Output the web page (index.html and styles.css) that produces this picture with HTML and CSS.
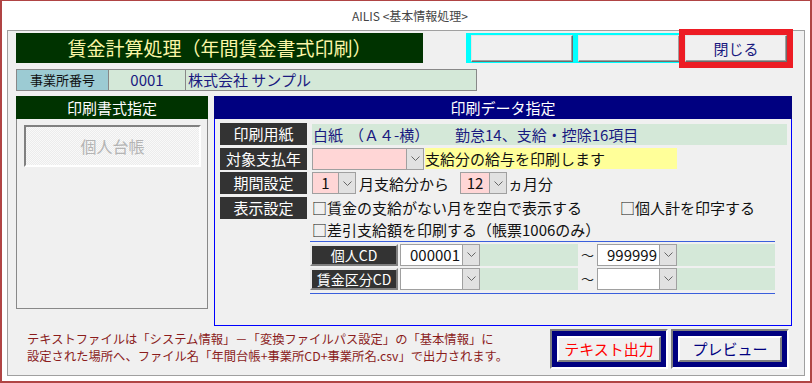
FILE: index.html
```html
<!DOCTYPE html>
<html lang="ja">
<head>
    <meta charset="UTF-8">
    <title>AILIS &lt;基本情報処理&gt;</title>
    <link rel="stylesheet" href="styles.css">
</head>
<body>

<div class="window">
    <div class="caption">AILIS &lt;基本情報処理&gt;</div>

    <div class="panel">
        <div class="top-row">
            <h1 class="title">賃金計算処理（年間賃金書式印刷）</h1>
            <div class="func-keys">
                <button type="button" class="key"></button>
                <button type="button" class="key"></button>
                <button type="button" class="key close">閉じる</button>
            </div>
        </div>

        <div class="office">
            <span class="office-label">事業所番号</span>
            <span class="office-code">0001</span>
            <span class="office-name">株式会社 サンプル</span>
        </div>

        <div class="main">
            <!-- left: format selection -->
            <section class="format">
                <h2 class="format-head">印刷書式指定</h2>
                <div class="format-body">
                    <button type="button" class="format-btn" disabled>個人台帳</button>
                </div>
            </section>

            <!-- right: print data -->
            <section class="data">
                <h2 class="data-head">印刷データ指定</h2>
                <div class="data-body">
                    <div class="rows">
                        <div class="row">
                            <span class="label">印刷用紙</span>
                            <span class="paper">
                                <span class="paper-kind">白紙</span>
                                <span class="paper-size">（Ａ４-横）</span>
                                <span>勤怠14、支給・控除16項目</span>
                            </span>
                        </div>

                        <div class="row">
                            <span class="label">対象支払年</span>
                            <span class="combo year">
                                <span class="val"></span>
                                <span class="arrow"><svg width="9" height="5" viewBox="0 0 9 5"><polyline points="0.5,0.5 4.5,4.5 8.5,0.5" fill="none" stroke="#666"/></svg></span>
                            </span>
                            <span class="hint">支給分の給与を印刷します</span>
                        </div>

                        <div class="row">
                            <span class="label">期間設定</span>
                            <span class="combo month">
                                <span class="val">1</span>
                                <span class="arrow"><svg width="9" height="5" viewBox="0 0 9 5"><polyline points="0.5,0.5 4.5,4.5 8.5,0.5" fill="none" stroke="#666"/></svg></span>
                            </span>
                            <span class="text from">月支給分から</span>
                            <span class="combo count">
                                <span class="val">12</span>
                                <span class="arrow"><svg width="9" height="5" viewBox="0 0 9 5"><polyline points="0.5,0.5 4.5,4.5 8.5,0.5" fill="none" stroke="#666"/></svg></span>
                            </span>
                            <span class="text unit">ヵ月分</span>
                        </div>

                        <div class="row multi">
                            <span class="label">表示設定</span>
                            <div class="checks">
                                <div class="check-line">
                                    <span class="check first">□賃金の支給がない月を空白で表示する</span>
                                    <span class="check">□個人計を印字する</span>
                                </div>
                                <div class="check-line">
                                    <span class="check">□差引支給額を印刷する（帳票1006のみ）</span>
                                </div>
                            </div>
                        </div>
                    </div>

                    <div class="cd">
                        <div class="cd-row">
                            <span class="cd-label">個人CD</span>
                            <span class="combo white">
                                <span class="val">000001</span>
                                <span class="arrow"><svg width="9" height="5" viewBox="0 0 9 5"><polyline points="0.5,0.5 4.5,4.5 8.5,0.5" fill="none" stroke="#666"/></svg></span>
                            </span>
                            <span class="fill"></span>
                            <span class="tilde">～</span>
                            <span class="combo white">
                                <span class="val">999999</span>
                                <span class="arrow"><svg width="9" height="5" viewBox="0 0 9 5"><polyline points="0.5,0.5 4.5,4.5 8.5,0.5" fill="none" stroke="#666"/></svg></span>
                            </span>
                            <span class="fill"></span>
                        </div>
                        <div class="cd-row">
                            <span class="cd-label">賃金区分CD</span>
                            <span class="combo white">
                                <span class="val"></span>
                                <span class="arrow"><svg width="9" height="5" viewBox="0 0 9 5"><polyline points="0.5,0.5 4.5,4.5 8.5,0.5" fill="none" stroke="#666"/></svg></span>
                            </span>
                            <span class="fill"></span>
                            <span class="tilde">～</span>
                            <span class="combo white">
                                <span class="val"></span>
                                <span class="arrow"><svg width="9" height="5" viewBox="0 0 9 5"><polyline points="0.5,0.5 4.5,4.5 8.5,0.5" fill="none" stroke="#666"/></svg></span>
                            </span>
                            <span class="fill"></span>
                        </div>
                    </div>
                </div>
            </section>
        </div>

        <div class="footer">
            <p class="note">テキストファイルは「システム情報」－「変換ファイルパス設定」の「基本情報」に<br>設定された場所へ、ファイル名「年間台帳+事業所CD+事業所名.csv」で出力されます。</p>
            <div class="actions">
                <button type="button" class="act"><span class="act-inner export">テキスト出力</span></button>
                <button type="button" class="act"><span class="act-inner">プレビュー</span></button>
            </div>
        </div>
    </div>
</div>

</body>
</html>
```

FILE: styles.css
```css
* {
    box-sizing: border-box;
}

body {
    margin: 0;
    font-family: "Noto Sans CJK JP", sans-serif;
    background: #fff;
}

.window {
    width: 812px;
    height: 383px;
    border: 2px solid #b04444;
    border-top-width: 1px;
    background: #fff;
}

.caption {
    height: 29px;
    line-height: 29px;
    text-align: center;
    font-size: 12px;
    color: #444;
    padding-left: 8px;
}

.panel {
    margin: 0 5px;
    height: 346px;
    border: 1px solid #a0a0a0;
    background: #f0f0f0;
    padding: 2px 12px 0 8px;
}

/* title row */
.top-row {
    display: flex;
    height: 30px;
}

.title {
    margin: 0;
    width: 407px;
    height: 30px;
    background: #003300;
    color: #fbf6a6;
    font-size: 19px;
    font-weight: normal;
    line-height: 30px;
    text-align: center;
}

.func-keys {
    display: flex;
    gap: 5px;
    margin-left: 43px;
    height: 30px;
    padding: 2px 5px 1px 5px;
    background: #00ffff;
}

.key {
    width: 102px;
    height: 27px;
    padding: 0;
    background: #f0f0f0;
    border: 1px solid;
    border-color: #e4e4e4 #6d6d6d #6d6d6d #e4e4e4;
    box-shadow: inset -1px -1px #a0a0a0;
    font-family: inherit;
    font-size: 15px;
    color: #1a1a80;
}

.close {
    outline: 6px solid #ed1c24;
}

/* office row */
.office {
    display: flex;
    width: 461px;
    height: 22px;
    margin-top: 6px;
}

.office span {
    border: 1px solid #888;
    line-height: 20px;
}

.office-label {
    width: 93px;
    background: #9ccbd3;
    text-align: center;
    font-size: 13px;
    color: #111;
}

.office-code {
    width: 78px;
    margin-left: -1px;
    background: #d4e8d8;
    text-align: center;
    font-size: 15px;
    color: #1a1a80;
}

.office-name {
    flex: 1;
    margin-left: -1px;
    padding-left: 2px;
    background: #d4e8d8;
    font-size: 15px;
    color: #1a1a80;
}

/* main area */
.main {
    display: flex;
    gap: 6px;
    align-items: flex-start;
    margin-top: 5px;
}

.format {
    width: 192px;
}

.format-head {
    margin: 0;
    height: 23px;
    background: #003300;
    color: #fff;
    font-size: 15px;
    font-weight: normal;
    line-height: 23px;
    text-align: center;
}

.format-body {
    height: 190px;
    border: 1px solid #888;
    border-top: 0;
    padding: 6px 6px 0 7px;
}

.format-btn {
    display: block;
    width: 177px;
    height: 42px;
    border: 2px solid;
    border-color: #808080 #fff #fff #808080;
    background: repeating-conic-gradient(#f9f9f9 0 25%, #ececec 0 50%) 0 0 / 2px 2px;
    font-family: inherit;
    font-size: 16px;
    color: #b4b4b4;
}

.data {
    width: 578px;
    height: 230px;
    border: 1px solid #0000ff;
    border-top: 0;
}

.data-head {
    margin: 0 -1px;
    height: 23px;
    background: #000080;
    color: #fff;
    font-size: 15px;
    font-weight: normal;
    line-height: 23px;
    text-align: center;
}

.data-body {
    padding: 4px 4px 0 5px;
    font-size: 15px;
    color: #111;
}

.rows {
    display: flex;
    flex-direction: column;
    gap: 2.5px;
}

.row {
    display: flex;
    align-items: center;
    height: 22px;
}

.row.multi {
    height: auto;
    align-items: flex-start;
}

.label {
    flex-shrink: 0;
    width: 87px;
    height: 22px;
    margin-right: 5px;
    background: #333;
    color: #fff;
    line-height: 22px;
    text-align: center;
}

.paper {
    display: flex;
    flex: 1;
    height: 21px;
    padding-left: 1px;
    background: #d4e8d8;
    line-height: 21px;
    color: #1a1a80;
    white-space: nowrap;
}

.paper-kind {
    width: 36px;
}

.paper-size {
    width: 106px;
}

.combo {
    display: flex;
    height: 22px;
    border: 1px solid #a0a0a0;
    background: #ffd6d6;
}

.combo .val {
    flex: 1;
    line-height: 20px;
    text-align: center;
}

.combo .arrow {
    display: flex;
    align-items: center;
    justify-content: center;
    width: 17px;
    border-left: 1px solid #a0a0a0;
    background: #e1e1e1;
}

.year {
    width: 112px;
}

.hint {
    width: 252px;
    height: 21px;
    margin-left: 1px;
    background: #ffff99;
    line-height: 21px;
}

.month {
    width: 44px;
}

.count {
    width: 47px;
}

.from {
    margin: 0 11px 0 3px;
}

.unit {
    margin-left: 1px;
}

.checks {
    line-height: 22px;
}

.check-line {
    display: flex;
    white-space: nowrap;
}

.check.first {
    width: 308px;
}

/* code ranges */
.cd {
    width: 465px;
    margin-left: 90px;
    padding: 2px 0 3px;
    border-top: 1px solid #3a5fdc;
    border-bottom: 1px solid #3a5fdc;
}

.cd-row {
    display: flex;
    height: 22px;
}

.cd-row + .cd-row {
    margin-top: 2px;
}

.cd-label {
    width: 88px;
    border: 2px solid;
    border-color: #e8e8e8 #808080 #808080 #e8e8e8;
    background: #333;
    color: #fff;
    font-size: 14px;
    line-height: 18px;
    text-align: center;
}

.combo.white {
    width: 80px;
    background: #fff;
}

.cd-label + .combo {
    margin-left: 2px;
}

.combo.white .val {
    text-align: right;
    padding-right: 2px;
}

.fill {
    width: 98px;
    background: #d4e8d8;
}

.tilde {
    width: 19px;
    font-size: 13px;
    line-height: 22px;
    text-align: center;
    color: #222;
}

/* footer */
.footer {
    display: flex;
    margin-top: 3px;
}

.note {
    margin: 0 0 0 11px;
    padding-top: 2px;
    font-size: 12.3px;
    line-height: 17px;
    color: #8b1c1c;
    white-space: nowrap;
}

.actions {
    display: flex;
    gap: 3px;
    margin: 0 3px 0 auto;
}

.act {
    width: 118px;
    height: 40px;
    padding: 5px;
    border: 2px solid;
    border-color: #808080 #fff #fff #808080;
    background: #000080;
    font-family: inherit;
}

.act-inner {
    display: block;
    height: 100%;
    border: 2px solid;
    border-color: #fff #808080 #808080 #fff;
    background: #f0f0f0;
    font-size: 15px;
    line-height: 22px;
    color: #000080;
}

.act-inner.export {
    color: #ff0000;
}
```
